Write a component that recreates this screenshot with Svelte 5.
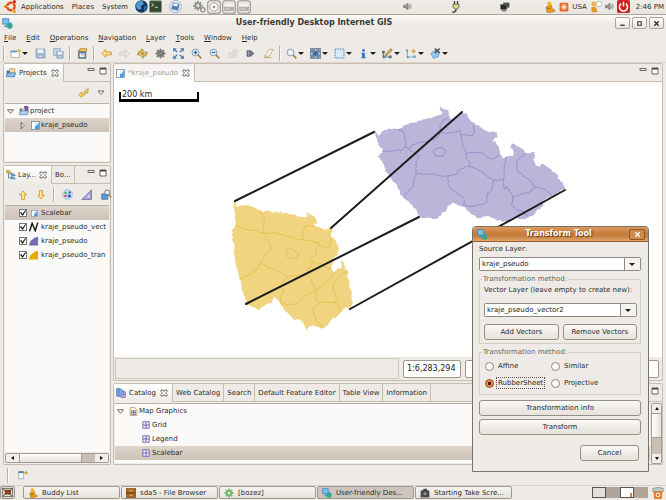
<script>
  let method = $state('RubberSheet');

  const menus = ['File', 'Edit', 'Operations', 'Navigation', 'Layer', 'Tools', 'Window', 'Help'];

  const tools = [
    { sep: true },
    { icon: 'new', drop: true, label: 'New' },
    { icon: 'save', label: 'Save' },
    { icon: 'saveall', label: 'Save all' },
    { sep: true },
    { icon: 'print', label: 'Print' },
    { sep: true },
    { icon: 'back', label: 'Back' },
    { icon: 'forward', label: 'Forward' },
    { icon: 'refresh', label: 'Refresh' },
    { icon: 'gear', label: 'Stop' },
    { icon: 'extent', label: 'Zoom to extent' },
    { icon: 'zoomin', label: 'Zoom in' },
    { icon: 'zoomout', label: 'Zoom out' },
    { icon: 'ghost', label: 'Zoom to selection' },
    { icon: 'commit', label: 'Commit' },
    { icon: 'eraser', label: 'Clear' },
    { sep: true },
    { icon: 'lens', drop: true, label: 'Zoom' },
    { icon: 'pan', drop: true, label: 'Pan', on: true },
    { icon: 'select', drop: true, label: 'Select' },
    { icon: 'info', drop: true, label: 'Info' },
    { icon: 'edit', drop: true, label: 'Edit geometry' },
    { icon: 'create', drop: true, label: 'Create geometry' },
    { icon: 'delete', drop: true, label: 'Delete geometry' }
  ];

  const layers = [
    { name: 'Scalebar', icon: 'page', on: true },
    { name: 'kraje_pseudo_vect', icon: 'line' },
    { name: 'kraje_pseudo', icon: 'polyPurple' },
    { name: 'kraje_pseudo_tran', icon: 'polyYellow' }
  ];

  const graphics = ['Grid', 'Legend', 'Scalebar'];
  const views = ['Web Catalog', 'Search', 'Default Feature Editor', 'Table View', 'Information'];

  const tasks = [
    { name: 'Buddy List', icon: 'buddy' },
    { name: 'sda5 - File Browser', icon: 'drawer' },
    { name: '[bozez]', icon: 'flower' },
    { name: 'User-friendly Des...', icon: 'app', on: true },
    { name: 'Starting Take Scre...', icon: 'camera' }
  ];

  // Roughens a coarse outline so that it reads as a surveyed boundary.
  function rough(points, amount, closed = false) {
    const pts = points.split(' ').map((p) => p.split(',').map(Number));
    if (closed) pts.push(pts[0]);
    let seed = 7;
    const rnd = () => {
      seed = (seed * 16807) % 2147483647;
      return seed / 2147483647 - 0.5;
    };
    let d = `M${pts[0]}`;
    for (let i = 1; i < pts.length; i++) {
      const [ax, ay] = pts[i - 1];
      const [bx, by] = pts[i];
      const n = Math.max(1, Math.round(Math.hypot(bx - ax, by - ay) / 5));
      for (let k = 1; k < n; k++) {
        const t = k / n;
        d += `L${(ax + (bx - ax) * t + rnd() * amount).toFixed(1)},${(ay + (by - ay) * t + rnd() * amount).toFixed(1)}`;
      }
      d += `L${bx},${by}`;
    }
    return d + (closed ? 'Z' : '');
  }

  const regions = [
    {
      kind: 'yellow',
      place: 'translate(220 90) scale(.3333)',
      outline:
        '40,330 48,332 49,352 57,347 70,346 88,347 100,351 110,357 124,362 130,367 137,362 150,364 158,368 165,364 175,368 183,365 188,371 200,369 212,373 222,374 233,379 250,382 258,383 262,376 257,370 266,369 275,376 287,385 292,398 282,402 288,410 303,414 312,421 322,418 331,410 337,415 332,430 335,443 346,450 350,463 358,478 352,495 340,503 338,520 333,540 345,545 350,538 362,536 364,512 370,516 376,538 386,545 381,560 388,575 387,590 396,605 394,625 398,640 390,655 376,652 360,668 350,680 335,690 325,705 308,716 295,712 280,706 268,708 260,722 254,706 240,690 225,690 210,676 195,662 183,645 176,632 164,622 150,640 135,645 125,650 117,662 107,655 95,650 78,642 75,620 66,600 63,575 58,568 50,530 45,510 40,490 43,465 36,450 37,418 48,404 46,375 40,350',
      borders: [
        '48,404 58,412 75,416 90,422 105,420 118,426 130,428',
        '120,362 128,378 134,392 127,410 130,428 140,430 165,428 185,435 205,440 230,448 250,450 270,452 285,458 297,456',
        '130,428 138,445 150,462 152,480 135,495 122,518 112,535 95,552 75,558 60,568',
        '250,450 247,425 256,408 275,408 288,410',
        '297,456 298,466 315,475 328,468 335,443',
        '298,466 287,480 288,495 270,505 278,518 300,520 312,528 335,540',
        '122,518 140,530 165,540 185,548 203,560 190,575 185,590 192,605 180,625 182,640 205,645 235,640 250,620 275,608 290,598',
        '203,560 235,555 262,552 265,535 278,518',
        '262,552 275,570 280,590 290,598 285,615 290,635 310,638 345,636 352,630 340,600 340,580 360,560 378,545',
        '290,598 305,590 325,570 345,548',
        '345,636 358,650 360,668',
        '300,642 285,650 278,660 285,680 290,695 308,712',
        '200,485 205,478 215,475 225,485 236,490 230,508 215,505 200,500 200,485'
      ]
    },
    {
      kind: 'purple',
      place: 'translate(370 90) scale(.3333)',
      outline:
        '12,122 18,122 25,140 35,125 45,120 70,115 85,117 100,108 115,102 130,98 150,92 165,88 180,84 195,80 212,74 218,70 208,60 210,50 222,58 235,62 237,78 245,88 255,84 265,75 275,66 290,70 293,82 305,95 318,105 335,112 350,122 368,125 383,128 383,140 368,150 378,160 388,175 390,190 398,205 410,200 430,195 430,185 420,170 425,160 440,168 455,175 465,188 480,190 495,185 494,200 488,210 497,225 510,230 520,222 535,232 548,245 562,252 566,268 580,280 584,298 570,305 550,315 520,330 517,350 500,362 490,375 470,385 450,388 430,383 410,395 385,392 370,385 350,378 325,385 310,375 290,360 278,350 262,345 245,338 232,350 230,365 215,370 205,385 190,388 170,382 155,385 145,375 135,355 120,340 100,322 90,310 82,290 70,275 60,262 48,245 42,225 32,210 22,200 32,190 40,180 25,165 22,150 18,140',
      borders: [
        '40,183 60,184 80,180 95,182 105,170 107,160 103,140 100,125 82,118',
        '107,168 118,178 125,165 145,158 165,155 185,150 205,140 212,128 230,130 250,128 272,122 272,135 290,135 305,138 312,128 310,105',
        '212,128 210,105 218,92 235,84',
        '118,178 135,190 148,200 138,215 137,250 132,275 125,295 108,310 102,322',
        '137,250 165,253 190,252 215,258 235,258 262,252 265,240 280,235 295,228 300,218 290,205 288,190 278,165 275,150 272,135',
        '288,190 310,188 330,186 350,200 368,207 385,198 390,195',
        '295,228 315,235 335,245 350,258 370,270 400,270 403,250 402,230 410,200',
        '235,258 235,285 245,300 270,315 285,330 280,345 300,350 330,345 350,338 352,310 365,300 370,270',
        '400,270 402,298 408,290 420,305 430,320 455,312 475,308 495,292 520,295 545,315',
        '495,292 485,275 460,258 440,240 440,215 455,200 468,190',
        '430,320 425,345 440,360 460,365 475,382',
        '190,185 200,175 215,172 227,185 218,198 197,198 190,185'
      ]
    }
  ];

  const vectors = [
    [235, 201, 374, 132],
    [331, 228, 462, 112],
    [246, 304, 419, 217],
    [350, 309, 565, 190]
  ];
</script>

{#snippet icon(name, size = 12)}
  <svg class="icon" width={size} height={size} viewBox="0 0 16 16" aria-hidden="true">
    {#if name === 'ubuntu'}
      <circle cx="8.500" cy="8" r="4.600" fill="none" stroke="#e2541b" stroke-width="3" />
      <path d="M8.500 8L1 8M8.500 8L13 .8M8.500 8L13 15.200" stroke="#efebe7" stroke-width="1.200" />
      <circle cx="1.900" cy="8" r="1.900" fill="#e07b1c" /><circle cx="12.800" cy="2" r="1.900" fill="#c9281c" /><circle cx="12.800" cy="14" r="1.900" fill="#f0a21c" />
    {:else if name === 'globe'}
      <circle cx="8" cy="8" r="7.700" fill="#17365c" />
      <path d="M2 4Q5 0 9 1L11 5L7 7L8 11L4 12Q0 8 2 4Z" fill="#4f9bd3" /><path d="M11 8L15 7Q15 11 11 14Z" fill="#2b6ca4" />
    {:else if name === 'terminal'}
      <rect x=".5" y="1" width="15" height="14" rx="1" fill="#2f4a2c" stroke="#8d918a" /><path d="M3 4l3 2-3 2M7 9h4" stroke="#dfe9d8" fill="none" />
    {:else if name === 'disk'}
      <circle cx="8" cy="8" r="7.500" fill="#dbe3ef" stroke="#9fb0c8" /><path d="M5 3l8 2-2 8-8-2z" fill="#5578ad" /><path d="M6 4l5 1-1 3-5-1z" fill="#f4f4f4" />
    {:else if name === 'gear'}
      <path d="M8 1v14M1 8h14M3 3l10 10M13 3L3 13" stroke="#6e6e6a" stroke-width="2.600" /><circle cx="8" cy="8" r="4.600" fill="#767672" /><path d="M6 6l4 4M10 6l-4 4" stroke="#aaa" />
    {:else if name === 'gears'}
      <path d="M6 1v12M0 7h12M2 3l8 8M10 3l-8 8" stroke="#8e8e8a" stroke-width="2" /><circle cx="6" cy="7" r="3" fill="#e2e0dc" stroke="#8e8e8a" stroke-width="2" /><circle cx="12" cy="12" r="2.600" fill="#eee" stroke="#8e8e8a" stroke-width="1.500" />
    {:else if name === 'cd' || name === 'drive'}
      <rect x=".8" y=".8" width="14.400" height="14.400" rx="3" fill="#ebe7e1" stroke="#98948c" stroke-width="1.200" />
      {#if name === 'cd'}
        <circle cx="8" cy="8" r="4.600" fill="#fafafa" stroke="#a0a0a0" /><circle cx="8" cy="8" r="1.400" fill="#8d8d8d" />
      {:else}
        <path d="M4 5h8l1 3H3z" fill="#fcfcfc" /><path d="M3 8h10v4H3z" fill="#c4c4c0" stroke="#888" stroke-width=".6" /><path d="M10 10h2" stroke="#4a4" />
      {/if}
    {:else if name === 'speaker'}
      <path d="M1 6h3l5-4v12l-5-4H1z" fill="#9a9a96" stroke="#5c5c58" /><path d="M11 5q2 3 0 6M13 3q3 5 0 10" fill="none" stroke="#7d7d79" stroke-width="1.300" />
    {:else if name === 'plug'}
      <path d="M6 0v5M10 0v5" stroke="#333" stroke-width="1.500" /><path d="M4 4h8v4q-1 3-4 3t-4-3z" fill="#d9d98c" stroke="#4c4c3c" /><path d="M8 11q0 4-5 4" stroke="#444" stroke-width="2" fill="none" />
    {:else if name === 'screens'}
      <rect x="5" y="1" width="10" height="8" fill="#44484c" /><rect x="1" y="4" width="10" height="8" fill="#25292d" stroke="#777" /><path d="M3 14h7" stroke="#666" stroke-width="2" />
    {:else if name === 'buddy'}
      <circle cx="7" cy="3.500" r="3" fill="#f4b52d" /><path d="M3 8l7-2 1 4 4 3-5 2H4z" fill="#eea01a" stroke="#b4700e" /><path d="M4 9l5 2" stroke="#7a4a08" />
    {:else if name === 'update'}
      <rect x="1" y="1" width="14" height="14" rx="2" fill="#e5692b" /><path d="M8 3v10M3 8h10M4.500 4.500l7 7M11.500 4.500l-7 7" stroke="#fff3df" stroke-width="1.500" />
    {:else if name === 'chat'}
      <circle cx="5" cy="4" r="3.200" fill="#f2b24d" /><path d="M2 8h6l2 7H2z" fill="#e79728" /><ellipse cx="12" cy="4" rx="4" ry="3.500" fill="#fff" stroke="#aaa" />
    {:else if name === 'power'}
      <rect width="16" height="16" rx="2" fill="#d32222" /><path d="M5 4.500a5 5 0 1 0 6 0M8 2v6" fill="none" stroke="#fff" stroke-width="1.800" />
    {:else if name === 'app'}
      <path d="M1 1h9v8H1z" fill="#7cc0ea" stroke="#2b79b5" /><path d="M4 11h5v2H3z" fill="#4e92c4" /><circle cx="11" cy="11" r="4.500" fill="#3aa4cf" /><path d="M9 8l4 1-1 3 3 1q-2 3-5 2l1-3-3-1z" fill="#3dab45" />
    {:else if name === 'new'}
      <rect x="1.500" y="4.500" width="12" height="9" fill="#fff" stroke="#b49a5b" /><path d="M1 4h9v2.500H1z" fill="#5b97cd" /><path d="M13 1v6M10 4h6" stroke="#e5b02c" stroke-width="1.700" />
    {:else if name === 'save' || name === 'saveall'}
      {#if name === 'saveall'}<path d="M1 1h10v10H1z" fill="#cad8e6" stroke="#819bb7" />{/if}
      <g transform={name === 'saveall' ? 'translate(4 4) scale(.75)' : ''}>
        <path d="M1.500 1.500h13v13h-12l-1-1z" fill="#a7bfd8" stroke="#7792b0" /><path d="M4 2h8v5H4z" fill="#f4f7fa" /><path d="M5 10h6v4H5z" fill="#e2e9ef" stroke="#7892ac" />
      </g>
    {:else if name === 'print'}
      <path d="M2 4h11v11H2z" fill="#4b89bd" stroke="#7c6d3d" /><path d="M4 1h10v4H4z" fill="#efc665" stroke="#ae7e28" /><path d="M4 8h7v5H4z" fill="#fff" /><path d="M6 10h4" stroke="#b35" />
    {:else if name === 'back'}
      <path d="M1 8l6-5.500v3.500h8v4H7v3.500z" fill="#ffe691" stroke="#ce942d" stroke-width="1.300" />
    {:else if name === 'forward'}
      <path d="M15 8L9 2.500V6H1v4h8v3.500z" fill="#eeebe6" stroke="#cac6bf" stroke-width="1.200" />
    {:else if name === 'up'}
      <path d="M8 1.500L2.500 7.500h3V15h5V7.500h3z" fill="#ffe691" stroke="#ce942d" stroke-width="1.300" />
    {:else if name === 'down'}
      <path d="M8 14.500L2.500 8.500h3V1h5v7.500h3z" fill="#ffe691" stroke="#ce942d" stroke-width="1.300" />
    {:else if name === 'refresh'}
      <path d="M1 10q0-6 6-6V1l4 4-4 3.500V6Q4 6 3.500 10z" fill="#f3ca55" stroke="#8e7420" /><path d="M15 6q0 6-6 6v3l-4-4 4-3.500V10q3 0 3.500-4z" fill="#f3ca55" stroke="#8e7420" />
    {:else if name === 'link'}
      <path d="M1 12l4-5 1 2h4l1-2-2-1 6-4-1 7-2-1-3 4H7l-2 3z" fill="#f5cf6a" stroke="#c58d24" />
    {:else if name === 'extent'}
      <path d="M1 1l5 5M15 1l-5 5M1 15l5-5M15 15l-5-5" stroke="#3a7ab5" stroke-width="2" /><path d="M1 5V1h4M11 1h4v4M1 11v4h4M11 15h4v-4" fill="none" stroke="#2e6aa3" stroke-width="1.300" />
    {:else if name === 'zoomin' || name === 'zoomout' || name === 'lens'}
      <path d="M10 10l5 5" stroke="#b4813b" stroke-width="2.500" /><circle cx="6.500" cy="6.500" r="5" fill={name === 'lens' ? '#eef2f5' : '#d5e8f6'} stroke="#8393a4" stroke-width="1.300" />
      {#if name !== 'lens'}<path d="M4 6.500h5" stroke="#245d9c" stroke-width="1.500" />{/if}
      {#if name === 'zoomin'}<path d="M6.500 4v5" stroke="#245d9c" stroke-width="1.500" />{/if}
    {:else if name === 'ghost'}
      <path d="M2 7h6v7H2zM9 2h5v5H9zM9 9h5v5H9z" fill="#e4e1dc" stroke="#d0ccc5" />
    {:else if name === 'commit'}
      <path d="M3 4h5l5 4-5 4H3z" fill="#747c8c" stroke="#42485a" /><path d="M5 5v6" stroke="#b5bac5" />
    {:else if name === 'eraser'}
      <path d="M2 12L9 2h6l-6 10z" fill="#fbf4e4" stroke="#b79a70" /><path d="M1 14h11" stroke="#c2a77c" stroke-width="1.500" />
    {:else if name === 'pan'}
      <rect width="16" height="16" fill="#87919c" /><path d="M8 1v14M1 8h14" stroke="#2a65a5" stroke-width="2" /><path d="M8 0l3 4H5zM8 16l3-4H5zM0 8l4-3v6zM16 8l-4-3v6z" fill="#dcecf9" stroke="#2a65a5" stroke-width=".8" />
    {:else if name === 'select'}
      <rect x="1.500" y="1.500" width="13" height="13" fill="#d8ebf8" stroke="#3d79ae" stroke-dasharray="2 1.500" stroke-width="1.400" />
    {:else if name === 'info'}
      <path d="M6 7h4v6h1v2H5v-2h1V9H5V7z" fill="#2d79bd" /><circle cx="8" cy="3.500" r="2" fill="#2d79bd" />
    {:else if name === 'edit'}
      <path d="M2 5v8h10" fill="none" stroke="#3e83b9" stroke-width="1.500" /><path d="M0 4h4v4H0zM10 11h4v4h-4zM1 11h3v4H1z" fill="#57736c" /><path d="M5 12l1-4 7-7 2 2-7 7z" fill="#e0b660" stroke="#7b5c22" />
    {:else if name === 'create'}
      <path d="M2 3v10h10" fill="none" stroke="#6fa4c8" stroke-width="1.300" /><path d="M0 2h3v3H0zM1 12h3v3H1zM11 11h3v3h-3z" fill="#6d98b0" /><path d="M11 1v7M7.500 4.500h7" stroke="#dfaa2c" stroke-width="2" />
    {:else if name === 'delete'}
      <path d="M1 8l5-4 8 2-2 7-7 2z" fill="#8fc5ee" stroke="#5b9cd0" /><path d="M7 1l7 6M14 1L7 7" stroke="#4f5459" stroke-width="2.500" />
    {:else if name === 'folder'}
      <path d="M1 4h5l1 2h7v8H1z" fill="#3c78bf" /><path d="M6 1h8v7H6z" fill="#f2dca4" stroke="#a68841" /><path d="M3 8h13l-3 6H0z" fill="#8fc0ee" stroke="#3470b3" />
    {:else if name === 'folderPurple'}
      <path d="M1 4h5l1 2h7v8H1z" fill="#5078b8" /><path d="M8 0h7v8H8z" fill="#6d5a9f" /><path d="M5 3h4v5H5z" fill="#e8d391" /><path d="M3 8h13l-3 6H0z" fill="#b1d3f2" stroke="#5c82b4" />
    {:else if name === 'page'}
      <rect x="1" y="1" width="14" height="14" fill="#fff" stroke="#6f8195" stroke-width="1.300" /><path d="M2 9h5V6l2-4h5v5l-4 7H8V9z" fill="#d7eafa" /><path d="M14 2v12H7V9q4 0 7-7z" fill="#3d9be9" />
    {:else if name === 'layers'}
      <path d="M4 4v9h4" fill="none" stroke="#5c728c" stroke-width="1.300" /><path d="M0 1h6l3 4H2z" fill="#e9bd51" stroke="#a77a23" /><path d="M7 6h5l3 3H9z" fill="#76b3e5" stroke="#2d6ca7" /><path d="M7 11h5l3 3H9z" fill="#76b3e5" stroke="#2d6ca7" />
    {:else if name === 'palette'}
      <circle cx="8" cy="8" r="7" fill="#cfe3f5" stroke="#8aaed4" /><circle cx="5" cy="5.500" r="1.700" fill="#2caf4c" /><circle cx="11" cy="5" r="1.700" fill="#3559cc" /><circle cx="5" cy="10" r="1.700" fill="#d33" /><circle cx="11" cy="10" r="2.200" fill="#315fc4" /><path d="M8 7v6" stroke="#e4b52d" stroke-width="1.500" />
    {:else if name === 'ruler'}
      <path d="M1 14L14 1v13z" fill="#a6a2d4" stroke="#6f6bb0" /><path d="M8 11l3-4v4z" fill="#f3f1f8" />
    {:else if name === 'zoomlayer'}
      <path d="M1 7h9v8H1z" fill="#4b9ce3" stroke="#597189" /><circle cx="9" cy="5" r="3.600" fill="#eef4f9" stroke="#5b6b7a" stroke-width="1.300" /><path d="M11 8l4 4" stroke="#a9803e" stroke-width="2" />
    {:else if name === 'line'}
      <path d="M1 15L5 2l5 12 4-13" fill="none" stroke="#111" stroke-width="2.200" />
    {:else if name === 'polyPurple'}
      <path d="M0 15q1-7 5-9 3-4 9-5l1 5-1 4 1 5z" fill="#716cae" />
    {:else if name === 'polyYellow'}
      <path d="M0 15q1-7 5-9 3-4 9-5l1 5-1 4 1 5z" fill="#e5a900" />
    {:else if name === 'catalog'}
      <path d="M1 1h6v12H1z" fill="#6ca8e6" stroke="#2c62ab" /><path d="M5 3h6v10H5z" fill="#9cc7f2" stroke="#2c62ab" /><path d="M8 6h7v9H8z" fill="#c9c6ee" stroke="#5951a5" /><path d="M8 10h7M11.500 6v9" stroke="#5951a5" />
    {:else if name === 'mapgfx'}
      <path d="M2 1h8l4 4v10H2z" fill="#fffbe9" stroke="#b08a3f" stroke-width="1.300" /><path d="M4.500 6.500h7v7h-7zM8 6v8M4 10h8" fill="#e2e0f7" stroke="#5f58ad" stroke-width="1.200" />
    {:else if name === 'grid'}
      <path d="M1.500 1.500h13v13h-13zM8 2v12M2 8h12" fill="#eceafb" stroke="#5f58ad" stroke-width="1.600" />
    {:else if name === 'fastview'}
      <path d="M1 3h8v11H1z" fill="#fff" stroke="#7f8d94" /><path d="M1 2h8v3H1z" fill="#3d7eb8" /><path d="M13 1v6M10 4h6" stroke="#d6a52d" stroke-width="2" />
    {:else if name === 'desktop'}
      <rect x="1" y="2" width="14" height="12" fill="#e8e2d8" stroke="#555" /><path d="M4 4h9v7H4z" fill="#8a4320" /><path d="M1 2l4 4M15 2l-4 4M1 14l4-4M15 14l-4-4" stroke="#333" stroke-width="1.300" />
    {:else if name === 'drawer'}
      <rect x="0" y="1" width="16" height="14" fill="#a86a1e" stroke="#6d410c" /><path d="M1 8h14" stroke="#55330b" stroke-width="1.500" /><path d="M5 4.500h6M5 11.500h6" stroke="#e2b565" stroke-width="1.500" />
    {:else if name === 'flower'}
      <path d="M8 1v14M1 8h14M3 3l10 10M13 3L3 13" stroke="#69b56d" stroke-width="3" /><circle cx="8" cy="8" r="3" fill="#e4f3e2" stroke="#4b9c58" />
    {:else if name === 'camera'}
      <path d="M1 4h3l2-3h5l1 3h3v11H1z" fill="#4b4d50" /><circle cx="8" cy="9" r="3.500" fill="#8a8f94" stroke="#222" />
    {:else if name === 'trash'}
      <path d="M2 5h12l-1 11H3z" fill="#f07a1c" /><path d="M1 2q7-3 14 0v4H1z" fill="#c9c7c1" stroke="#8d8a83" /><circle cx="8" cy="10.500" r="2.500" fill="none" stroke="#fff" stroke-width="1.300" />
    {:else if name === 'close'}
      <path d="M2 2h4l2 3 2-3h4v3l-3 3 3 3v3h-4l-2-3-2 3H2v-3l3-3-3-3z" fill="#fff" stroke="#444" stroke-width="1.500" />
    {:else if name === 'min'}
      <path d="M2 3h12v4H2z" fill="#fff" stroke="#444" stroke-width="1.600" />
    {:else if name === 'max'}
      <path d="M2 2h12v12H2z" fill="#fff" stroke="#444" stroke-width="1.600" /><path d="M2 3.500h12" stroke="#444" stroke-width="3" />
    {:else if name === 'menu'}
      <path d="M2 4h12l-6 7z" fill="#fff" stroke="#444" stroke-width="1.500" />
    {:else if name === 'open'}
      <path d="M1 4h14l-7 8z" fill="#fff" stroke="#444" stroke-width="1.800" />
    {:else if name === 'shut'}
      <path d="M5 1v14l7-7z" fill="#fff" stroke="#444" stroke-width="1.800" />
    {:else if name === 'wmin'}
      <path d="M3 12h10" stroke="#333" stroke-width="3" />
    {:else if name === 'wmax'}
      <path d="M4 4h8v8H4z" fill="none" stroke="#333" stroke-width="2.500" />
    {:else if name === 'wclose'}
      <path d="M3 3l10 10M13 3L3 13" stroke="currentColor" stroke-width="3" />
    {/if}
  </svg>
{/snippet}

{#snippet corner(onlyMax = false)}
  <span class="corner">
    {#if !onlyMax}<button aria-label="Minimize">{@render icon('min', 8)}</button>{/if}
    <button aria-label="Maximize">{@render icon('max', 8)}</button>
  </span>
{/snippet}

<div class="desktop">
  <header class="panel">
    <nav class="panel-left">
      {@render icon('ubuntu', 13)}
      <button>Applications</button><button>Places</button><button>System</button>
      <span class="launch">{@render icon('globe', 13)}{@render icon('terminal', 13)}</span>
      <span class="launch">{@render icon('disk', 13)}</span>
      <span class="mounts">{@render icon('gears', 13)}{@render icon('cd', 14)}{@render icon('drive', 14)}{@render icon('drive', 14)}</span>
    </nav>
    <div class="applets">{@render icon('speaker', 9)}{@render icon('plug', 12)}{@render icon('screens', 10)}</div>
    <div class="tray">
      {@render icon('buddy', 12)}{@render icon('update', 10)}<span>USA</span>{@render icon('chat', 12)}{@render icon('speaker', 9)}{@render icon('power', 13)}
      <time>2:46 PM</time>
    </div>
  </header>

  <div class="titlebar">
    {@render icon('app', 11)}
    <h1>User-friendly Desktop Internet GIS</h1>
    <span class="wm">
      <button aria-label="Minimize window">{@render icon('wmin', 7)}</button>
      <button aria-label="Maximize window">{@render icon('wmax', 7)}</button>
      <button aria-label="Close window">{@render icon('wclose', 7)}</button>
    </span>
  </div>

  <nav class="menubar">
    {#each menus as m}<button><u>{m[0]}</u>{m.slice(1)}</button>{/each}
  </nav>

  <div class="toolbar">
    {#each tools as t}
      {#if t.sep}
        <i class="sep"></i>
      {:else}
        <button class:drop={t.drop} aria-label={t.label}>{@render icon(t.icon, 11)}{#if t.drop}<i class="caret"></i>{/if}</button>
      {/if}
    {/each}
  </div>

  <main class="bench">
    <div class="side">
      <section class="view projects">
        <div class="tabs">
          <button class="tab on">{@render icon('folder', 10)}<span>Projects</span>{@render icon('close', 8)}</button>
          {@render corner()}
        </div>
        <div class="viewbar"><span class="push"></span>{@render icon('link', 11)}{@render icon('menu', 8)}</div>
        <ul class="list">
          <li>{@render icon('open', 7)}{@render icon('folderPurple', 10)}<span>project</span></li>
          <li class="child on">{@render icon('shut', 7)}{@render icon('page', 9)}<span>kraje_pseudo</span></li>
        </ul>
      </section>

      <section class="view layers">
        <div class="tabs">
          <button class="tab on">{@render icon('layers', 10)}<span>Lay...</span>{@render icon('close', 8)}</button>
          <button class="tab short">Bo...</button>
          {@render corner()}
        </div>
        <div class="viewbar layerbar">
          {@render icon('up', 10)}{@render icon('down', 10)}<i class="sep"></i>{@render icon('palette', 11)}{@render icon('ruler', 12)}{@render icon('zoomlayer', 11)}
        </div>
        <ul class="list">
          {#each layers as l}
            <li class="layer" class:on={l.on}>
              <label><input type="checkbox" checked />
                <span class="glyph">{@render icon(l.icon, l.icon === 'page' ? 7 : 10)}</span>
                <span>{l.name}</span></label>
            </li>
          {/each}
        </ul>
        <div class="hscroll"><button aria-label="Scroll left"><i class="tri left"></i></button><span class="thumb"></span><span class="trough"></span><button aria-label="Scroll right"><i class="tri right"></i></button></div>
      </section>
    </div>

    <div class="center">
      <section class="view editor">
        <div class="tabs">
          <button class="tab on dim">{@render icon('page', 9)}<span>*kraje_pseudo</span>{@render icon('close', 8)}</button>
          {@render corner()}
        </div>
        <div class="map">
          <svg viewBox="114 82 548 276" preserveAspectRatio="xMinYMin meet" role="img" aria-label="Map">
            {#each regions as r}
              <g class={r.kind} transform={r.place}>
                <path class="land" d={rough(r.outline, 5, true)} />
                {#each r.borders as b}<path class="border" d={rough(b, 4)} />{/each}
              </g>
            {/each}
            {#each vectors as [x1, y1, x2, y2]}<line {x1} {y1} {x2} {y2} class="vector" />{/each}
          </svg>
          <div class="scalebar">200 km</div>
        </div>
        <div class="mapstatus">
          <span class="message"></span>
          <input class="scale" aria-label="Map scale" value="1:6,283,294" />
          <input class="coords" aria-label="Coordinates" value="" />
        </div>
      </section>

      <section class="view catalog">
        <div class="tabs">
          <button class="tab on">{@render icon('catalog', 10)}<span>Catalog</span>{@render icon('close', 8)}</button>
          {#each views as v}<button class="tab">{v}</button>{/each}
          {@render corner(true)}
        </div>
        <div class="catbody">
          <ul class="list">
            <li>{@render icon('open', 7)}{@render icon('mapgfx', 9)}<span>Map Graphics</span></li>
            {#each graphics as g}
              <li class="leaf" class:on={g === 'Scalebar'}>{@render icon('grid', 8)}<span>{g}</span></li>
            {/each}
          </ul>
          <div class="vscroll"><button aria-label="Scroll up"><i class="tri up"></i></button><span class="thumb"></span><span class="trough"></span><button aria-label="Scroll down"><i class="tri down"></i></button></div>
        </div>
      </section>
    </div>
  </main>

  <div class="statusline"><i class="sep"></i>{@render icon('fastview', 10)}</div>

  <footer class="taskbar">
    <button class="show" aria-label="Show desktop">{@render icon('desktop', 11)}</button>
    <i class="grip"></i>
    {#each tasks as t}<button class="task" class:on={t.on}>{@render icon(t.icon, 10)}<span>{t.name}</span></button>{/each}
    <span class="push"></span>
    <span class="pager"><i class="win"></i><i></i><i class="win cur"></i><i></i></span>
    {@render icon('trash', 12)}
  </footer>

  <div class="dialog" role="dialog" aria-labelledby="dlg-title">
    <div class="dlg-title">
      {@render icon('app', 11)}
      <h2 id="dlg-title">Transform Tool</h2>
      <button aria-label="Close">{@render icon('wclose', 7)}</button>
    </div>
    <div class="dlg-body">
      <label for="source">Source Layer:</label>
      <div class="combo"><select id="source"><option>kraje_pseudo</option></select><i class="caret"></i></div>
      <fieldset class="vec">
        <legend>Transformation method:</legend>
        <label for="vector">Vector Layer (leave empty to create new):</label>
        <div class="combo"><select id="vector"><option>kraje_pseudo_vector2</option></select><i class="caret"></i></div>
        <div class="pair"><button class="btn">Add Vectors</button><button class="btn">Remove Vectors</button></div>
      </fieldset>
      <fieldset class="methods">
        <legend>Transformation method:</legend>
        <div class="radios">
          {#each ['Affine', 'Similar', 'RubberSheet', 'Projective'] as m}
            <label><input type="radio" name="method" value={m} bind:group={method} /><span class:focus={m === method}>{m}</span></label>
          {/each}
        </div>
      </fieldset>
      <button class="btn">Transformation info</button>
      <button class="btn">Transform</button>
      <button class="btn cancel">Cancel</button>
    </div>
  </div>
</div>

<style>
  :global(body) { margin: 0; background: #eeebe6; }
  .desktop, .desktop * { box-sizing: border-box; }
  .desktop {
    position: relative;
    height: 100vh;
    display: flex;
    flex-direction: column;
    overflow: hidden;
    background: #eeebe6;
    color: #2b2b2b;
    font: 7px/10px "DejaVu Sans", sans-serif;
    white-space: nowrap;
  }
  button { font: inherit; color: inherit; border: 0; background: none; padding: 0; margin: 0; display: flex; align-items: center; }
  h1, h2, ul { margin: 0; padding: 0; list-style: none; }
  .icon { flex: none; display: block; }
  .push { flex: 1; }

  .panel { height: 15px; flex: none; display: flex; align-items: center; justify-content: space-between; padding: 0 2px 1px 4px; background: linear-gradient(#f0ede8, #e9e5df); border-bottom: 1px solid #a9a39a; }
  .panel-left { display: flex; align-items: center; gap: 8px; }
  .panel-left > .icon { margin-right: -4px; }
  .launch, .mounts { display: flex; align-items: center; gap: 1px; }
  .launch { margin-left: -1px; }
  .mounts { margin-left: 3px; }
  .applets { display: flex; align-items: center; gap: 38px; margin-left: 118px; }
  .tray { display: flex; align-items: center; gap: 3px; }
  .tray time { margin-left: 3px; }

  .titlebar { height: 16px; flex: none; display: flex; align-items: center; padding: 0 2px; background: linear-gradient(#fbfaf8, #edeae5 60%); }
  h1 { flex: 1; text-align: center; font-size: 8px; color: #3a3a3a; }
  .wm { display: flex; gap: 2px; }
  .wm button { width: 15px; height: 12px; justify-content: center; border: 1px solid #aaa49b; border-radius: 2px; background: linear-gradient(#fff, #e7e3dd); }

  .menubar { height: 13px; flex: none; display: flex; align-items: center; gap: 10px; padding-left: 4px; }
  u { text-decoration-thickness: 1px; text-underline-offset: 1px; }

  .toolbar { height: 19px; flex: none; display: flex; align-items: center; padding-left: 1px; border-bottom: 1px solid #dcd6ce; }
  .toolbar button { width: 18px; height: 16px; justify-content: center; }
  .toolbar button.drop { width: 24px; gap: 1px; }
  .sep { width: 2px; height: 15px; margin: 0 2px; flex: none; border-left: 1px solid #b9b0a7; border-right: 1px solid #fbfaf8; }
  .caret { width: 0; height: 0; flex: none; border: 3px solid transparent; border-top-color: #1e1e1e; border-bottom: 0; }

  .bench { flex: 1; min-height: 0; display: flex; gap: 2px; padding: 0 3px; }
  .side { width: 108px; flex: none; display: flex; flex-direction: column; gap: 2px; }
  .center { flex: 1; min-width: 0; display: flex; flex-direction: column; gap: 2px; }
  .view { display: flex; flex-direction: column; min-height: 0; border: 1px solid #c9bdb2; border-radius: 2px 2px 0 0; background: #eeebe6; }
  .projects { flex: 0 0 100px; }
  .layers { flex: 1; }
  .editor { flex: 1; }
  .catalog { flex: 0 0 82px; }

  .tabs { height: 18px; flex: none; display: flex; border-bottom: 1px solid #c9bdb2; }
  .tab { padding: 0 3px; border-right: 1px solid #c9bdb2; }
  .tab.on { gap: 3px; padding: 0 4px 0 2px; background: linear-gradient(#fff, #eeebe6); margin-bottom: -1px; }
  .tab.on .icon:last-child { margin-left: 1px; }
  .tab.dim { color: #aaa6a0; background: linear-gradient(#f4f2ef, #fff); }
  .layers .tab.on { gap: 2px; }
  .corner { margin-left: auto; display: flex; gap: 4px; padding: 3px 3px 0 0; align-items: flex-start; }

  .viewbar { height: 21px; flex: none; display: flex; align-items: center; gap: 8px; padding: 0 5px; }
  .layerbar { padding-left: 14px; }
  .layerbar .sep { margin: 0 -1px; }
  .list { flex: 1; min-height: 0; overflow: hidden; margin: 0 1px 1px; background: #fbfaf8; border-top: 1px solid #b9b1a8; }
  .list li { height: 14px; display: flex; align-items: center; gap: 1px; padding-left: 2px; }
  .list li .icon:first-child { margin-right: 4px; }
  .list li.child { padding-left: 14px; }
  .list li.leaf { padding-left: 27px; }
  .list li.leaf .icon:first-child { margin-right: 1px; }
  .list li.on { background: linear-gradient(#ddd4cb, #cec3b8); }
  .list li.layer { padding-left: 14px; }
  .layer label { display: flex; align-items: center; gap: 1px; }
  .list .glyph { width: 12px; display: flex; justify-content: center; }
  .list li .glyph .icon:first-child { margin: 0; }

  input[type='checkbox'] { appearance: none; width: 8px; height: 8px; margin: 0; display: grid; place-items: center; border: 1px solid #777; background: #fff; }
  input[type='checkbox']:checked::before { content: ''; width: 6px; height: 6px; background: #111; clip-path: polygon(0 45%, 20% 35%, 40% 65%, 90% 0, 100% 10%, 45% 100%); }

  .tri { width: 0; height: 0; border: 2px solid transparent; }
  .tri.left { border-right: 3px solid #111; border-left: 0; }
  .tri.right { border-left: 3px solid #111; border-right: 0; }
  .tri.up { border-bottom: 3px solid #111; border-top: 0; }
  .tri.down { border-top: 3px solid #111; border-bottom: 0; }
  .hscroll { height: 10px; flex: none; display: flex; margin: 0 1px 1px; border: 1px solid #a39a90; border-radius: 2px; background: #c9bfb5; }
  .hscroll button { width: 13px; justify-content: center; background: #f1eeea; }
  .hscroll .thumb { flex: 1; border: solid #a39a90; border-width: 0 1px; background: linear-gradient(#fff, #e6e1db); }
  .hscroll .trough { width: 13px; }
  .vscroll { width: 11px; flex: none; display: flex; flex-direction: column; border: 1px solid #a39a90; border-radius: 2px; background: #c9bfb5; }
  .vscroll button { height: 9px; justify-content: center; background: #f1eeea; }
  .vscroll .thumb { flex: 1; border: solid #a39a90; border-width: 1px 0; background: linear-gradient(90deg, #fff, #e6e1db); }
  .vscroll .trough { height: 16px; }

  .map { flex: 1; min-height: 0; position: relative; background: #fff; overflow: hidden; }
  .map svg { display: block; width: 100%; }
  .scalebar { position: absolute; left: 5px; top: 10px; width: 80px; height: 10px; padding-left: 1px; border: solid #000; border-width: 0 2px 3px; font-size: 8px; line-height: 6px; }
  .yellow .land { fill: #f0d480; }
  .yellow .border { stroke: #e7bf4c; }
  .purple .land { fill: #bab6da; }
  .purple .border { stroke: #958ec8; }
  .border { fill: none; stroke-width: 3; }
  .vector { stroke: #1c1c1c; stroke-width: 2; stroke-linecap: round; }
  .mapstatus { height: 23px; flex: none; display: flex; gap: 4px; padding: 1px 3px 1px 1px; }
  .mapstatus .message { flex: 1; border: 1px solid #cfc6bd; }
  .mapstatus input { min-width: 0; height: 18px; align-self: center; padding: 0 3px; border: 1px solid #9f978e; border-radius: 2px; background: #fff; color: #222; font: 8px "DejaVu Sans", sans-serif; }
  .mapstatus .scale { width: 58px; }
  .mapstatus .coords { width: 194px; }

  .catbody { flex: 1; min-height: 0; display: flex; margin-top: 1px; }

  .statusline { height: 20px; flex: none; display: flex; align-items: center; gap: 7px; padding-left: 5px; }
  .taskbar { height: 15px; flex: none; display: flex; align-items: center; gap: 1px; padding: 0 2px 1px 0; border-top: 1px solid #d7d0c8; }
  .taskbar > button { height: 13px; border: 1px solid #a0988f; border-radius: 2px; background: linear-gradient(#f6f4f1, #e7e3dd); }
  .taskbar .show { width: 15px; justify-content: center; background: #d9d2ca; }
  .grip { width: 4px; height: 10px; margin-right: 2px; background: radial-gradient(#c0b8af 30%, transparent 35%) 0 0 / 2px 2px; }
  .taskbar .task { flex: 0 1 97px; gap: 4px; padding-left: 4px; }
  .taskbar .task.on { background: #cdc5bd; }
  .pager { display: flex; height: 11px; margin-right: 3px; background: #b0a598; }
  .pager i { width: 14px; }
  .pager .win { border: 1px solid #555; background: #e4dfd9; }
  .pager .cur { background: linear-gradient(#e67b2e, #e67b2e) 9px 5px / 2px 4px no-repeat #fff; }

  .dialog { position: absolute; left: 472px; top: 226px; width: 177px; border: 1px solid #77716a; border-radius: 4px 4px 0 0; background: #eeebe6; overflow: hidden; }
  .dlg-title { height: 15px; display: flex; align-items: center; padding: 0 3px 0 4px; background: linear-gradient(#dc9a5e, #c67a38 50%, #c98344 70%, #e0a971); border-bottom: 1px solid #9a602c; color: #fff; }
  h2 { flex: 1; text-align: center; font-size: 8px; color: #fff; text-shadow: 1px 1px 1px #5f3510; }
  .dlg-title button { width: 16px; height: 11px; justify-content: center; border: 1px solid #8d5426; border-radius: 2px; background: #cf8a4c; }
  .dlg-body { display: flex; flex-direction: column; gap: 3px; padding: 2px 7px 10px 6px; }
  .combo { height: 14px; display: flex; align-items: center; border: 1px solid #8f8981; border-radius: 2px; background: #fff; position: relative; }
  .combo select { appearance: none; width: 100%; height: 100%; padding: 0 2px; border: 0; background: linear-gradient(#8f8981, #8f8981) right 15px top / 1px 100% no-repeat, linear-gradient(#f5f3f0, #f5f3f0) right / 15px 100% no-repeat, #fff; font: 7px "DejaVu Sans", sans-serif; color: #222; }
  .combo .caret { position: absolute; right: 5px; pointer-events: none; }
  fieldset { min-width: 0; margin: 0; border: 1px solid #d3ccc4; padding: 1px 3px 3px 4px; }
  .vec { display: flex; flex-direction: column; }
  .vec label { margin-bottom: 8px; }
  legend { padding: 0 1px; margin-left: -2px; color: #666; }
  .pair { display: grid; grid-template-columns: 1fr 1fr; gap: 4px; margin-top: 7px; }
  .btn { height: 16px; justify-content: center; border: 1px solid #948e86; border-radius: 3px; background: linear-gradient(#fbfaf9, #ece9e4 60%, #e6e2dc); }
  .methods { margin-bottom: 2px; }
  .radios { display: grid; grid-template-columns: 66px 1fr; row-gap: 1px; padding-left: 1px; }
  .radios label { height: 16px; display: flex; align-items: center; gap: 2px; }
  .radios span { padding: 0 1px; border: 1px solid transparent; }
  .radios span.focus { border: 1px dotted #555; }
  input[type='radio'] { appearance: none; width: 9px; height: 9px; margin: 0; border: 1px solid #8a847c; border-radius: 50%; background: #fff; }
  input[type='radio']:checked { border-color: #8c4a1d; background: radial-gradient(#3a1c08 28%, #ef8b48 34%); }
  .cancel { width: 59px; align-self: flex-end; margin: 7px 2px 0 0; }
</style>
